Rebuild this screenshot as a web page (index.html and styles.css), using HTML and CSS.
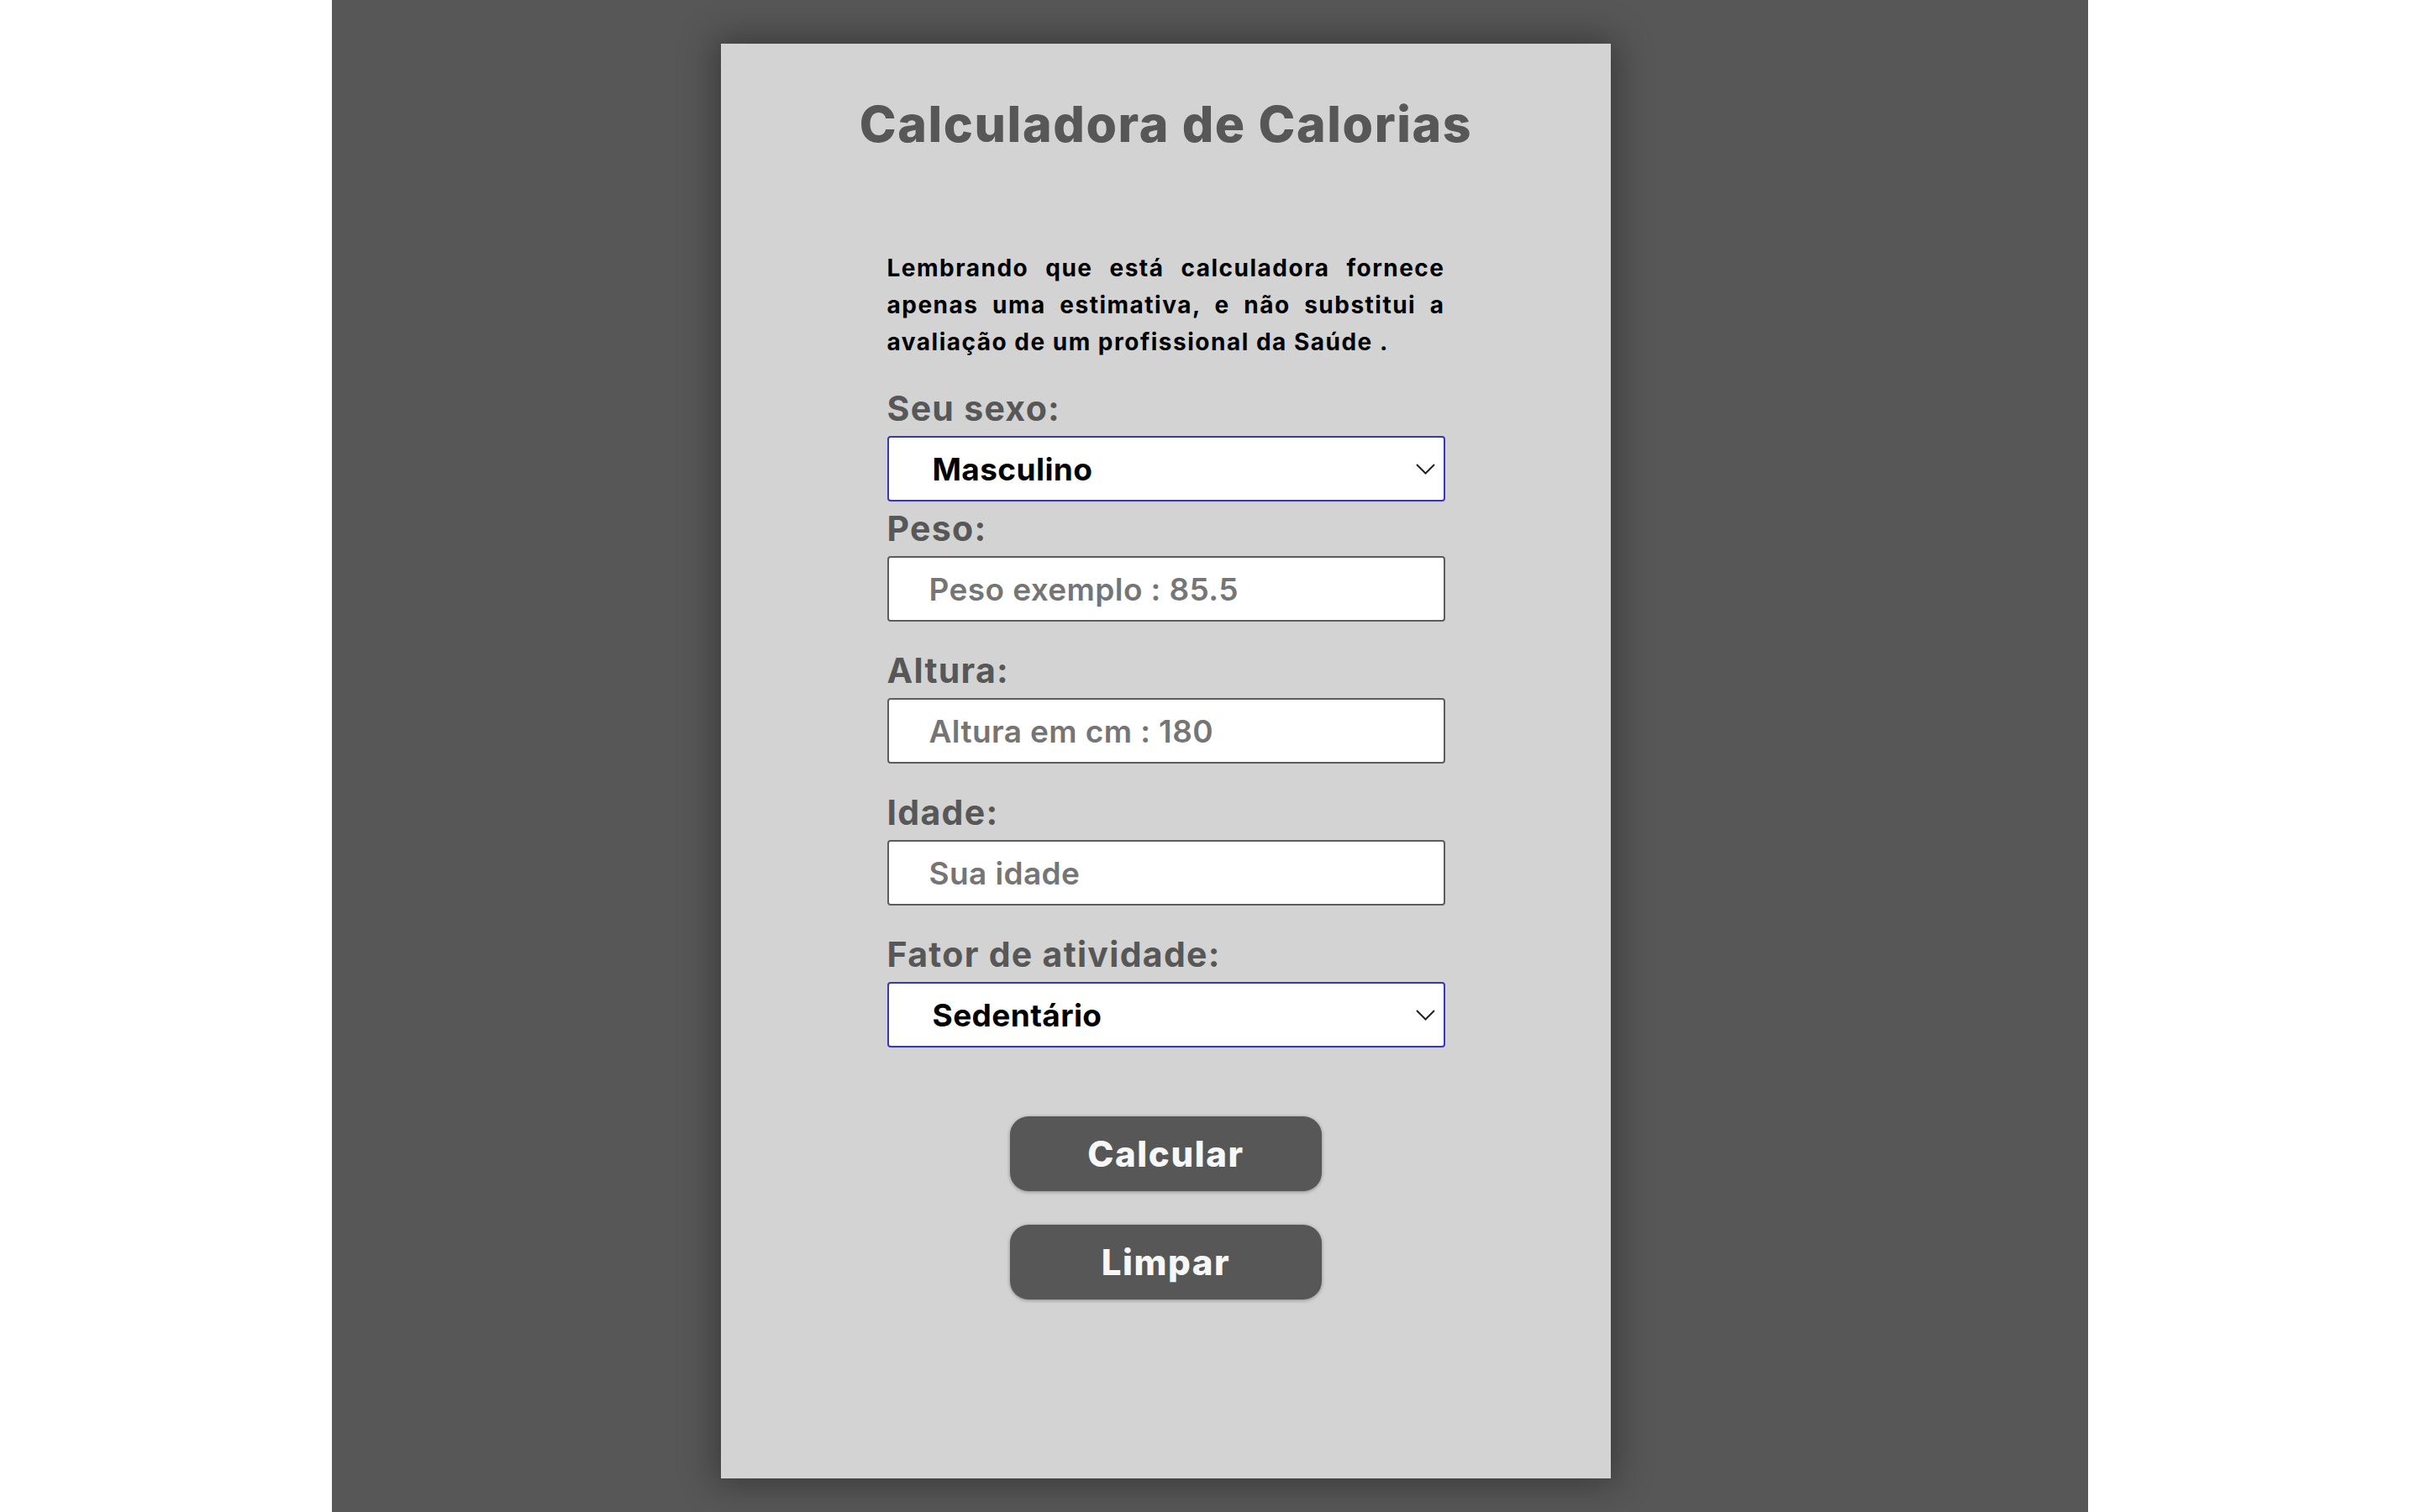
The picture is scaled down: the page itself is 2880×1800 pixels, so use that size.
FILE: index.html
```html
<!DOCTYPE html>
<html lang="pt-BR">
<head>
<meta charset="utf-8">
<title>Calculadora de Calorias</title>
<link rel="stylesheet" href="styles.css">
</head>
<body>
<div class="page">
  <main class="card">
    <h1 class="title">Calculadora de Calorias</h1>
    <form class="form">
      <p class="note">
        <span class="line">Lembrando que está calculadora fornece</span>
        <span class="line">apenas uma estimativa, e não substitui a</span>
        <span class="line last">avaliação de um profissional da Saúde .</span>
      </p>
      <div class="field">
        <label class="label" for="sexo">Seu sexo:</label>
        <div class="select-wrap">
          <select id="sexo" class="control select">
            <option>Masculino</option>
            <option>Feminino</option>
          </select>
          <svg class="chevron" viewBox="0 0 23 13" width="23" height="13"><path d="M1 1 L11.5 11.5 L22 1" fill="none" stroke="#222" stroke-width="2"/></svg>
        </div>
      </div>
      <div class="field tight">
        <label class="label" for="peso">Peso:</label>
        <input id="peso" class="control" type="text" placeholder="Peso exemplo : 85.5">
      </div>
      <div class="field">
        <label class="label" for="altura">Altura:</label>
        <input id="altura" class="control" type="text" placeholder="Altura em cm : 180">
      </div>
      <div class="field">
        <label class="label" for="idade">Idade:</label>
        <input id="idade" class="control" type="text" placeholder="Sua idade">
      </div>
      <div class="field">
        <label class="label" for="fator">Fator de atividade:</label>
        <div class="select-wrap">
          <select id="fator" class="control select">
            <option>Sedentário</option>
          </select>
          <svg class="chevron" viewBox="0 0 23 13" width="23" height="13"><path d="M1 1 L11.5 11.5 L22 1" fill="none" stroke="#222" stroke-width="2"/></svg>
        </div>
      </div>
      <div class="buttons">
        <button type="button" class="btn">Calcular</button>
        <button type="button" class="btn">Limpar</button>
      </div>
    </form>
  </main>
</div>
</body>
</html>
```
FILE: styles.css
```css
html, body {
  margin: 0;
  padding: 0;
  background: #ffffff;
}

body {
  font-family: Inter, "Noto Sans", "Liberation Sans", sans-serif;
}

.page {
  width: 2090px;
  height: 1800px;
  margin: 0 auto;
  background: #575757;
  padding-top: 52px;
  box-sizing: border-box;
  overflow: hidden;
}

.card {
  width: 1059px;
  height: 1708px;
  margin-left: 463px;
  background: #d3d3d3;
  box-shadow: 0 0 40px 6px rgba(0, 0, 0, 0.35);
  box-sizing: border-box;
  padding-top: 61px;
  display: flex;
  flex-direction: column;
  align-items: center;
}

.title {
  margin: 0;
  font-size: 59px;
  line-height: 70px;
  font-weight: 800;
  color: #575757;
  text-align: center;
  letter-spacing: 1.6px;
}

.form {
  width: 664px;
  margin-top: 114px;
  display: flex;
  flex-direction: column;
}

.note {
  margin: 0;
  font-size: 28px;
  line-height: 44px;
  font-weight: 700;
  color: #000;
  letter-spacing: 1.5px;
}

.line {
  display: block;
  text-align: justify;
  text-align-last: justify;
}

.line.last {
  text-align-last: left;
}

.field {
  display: flex;
  flex-direction: column;
  margin-top: 30px;
}

.field.tight {
  margin-top: 4px;
}

.note + .field {
  margin-top: 29px;
}

.label {
  font-size: 41px;
  line-height: 56px;
  font-weight: 700;
  color: #575757;
  margin-bottom: 5px;
  letter-spacing: 1.3px;
}

.control {
  width: 100%;
  height: 78px;
  box-sizing: border-box;
  border: 2px solid #5c5c5c;
  border-radius: 4px;
  background: #ffffff;
  padding: 0 48px;
  font-family: inherit;
  font-size: 37px;
  font-weight: 600;
  color: #000;
  outline: none;
  margin: 0;
  letter-spacing: 0.4px;
}

.control::placeholder {
  color: #757575;
  opacity: 1;
}

.select-wrap {
  position: relative;
}

.select {
  appearance: none;
  -webkit-appearance: none;
  border-color: #3636c4;
  padding-left: 52px;
  font-weight: 700;
}

.chevron {
  position: absolute;
  right: 12px;
  top: 33px;
  pointer-events: none;
}

.buttons {
  display: flex;
  flex-direction: column;
  align-items: center;
  gap: 40px;
  margin-top: 82px;
}

.btn {
  width: 371px;
  height: 89px;
  border: none;
  border-radius: 22px;
  background: #575757;
  color: #f7f7f7;
  font-family: inherit;
  font-size: 42px;
  font-weight: 800;
  letter-spacing: 1.6px;
  box-shadow: 0 1px 4px rgba(0, 0, 0, 0.35);
  cursor: pointer;
  padding: 0;
}
```
